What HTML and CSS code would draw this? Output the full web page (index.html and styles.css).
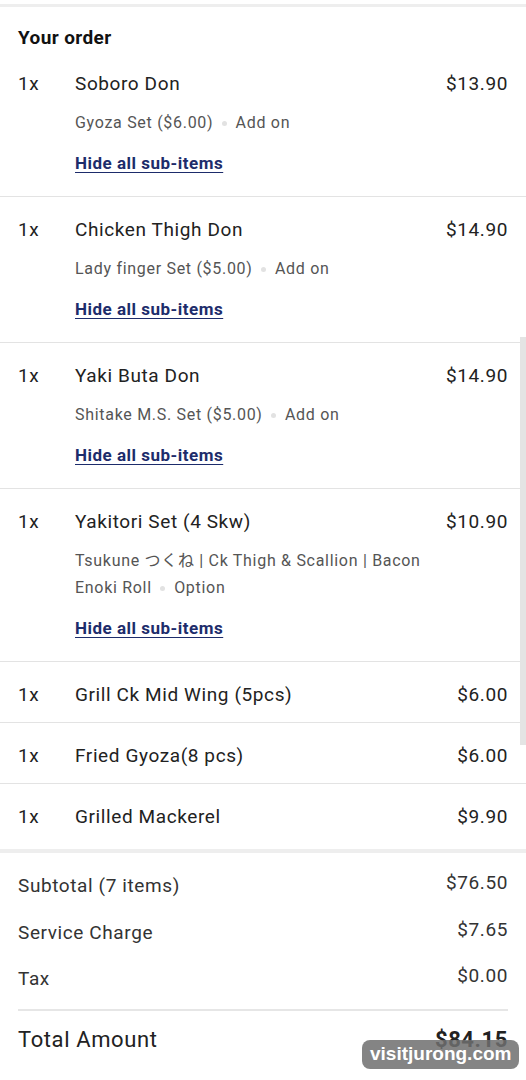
FILE: index.html
```html
<!DOCTYPE html>
<html lang="en">
<head>
    <meta charset="UTF-8">
    <meta name="viewport" content="width=device-width, initial-scale=1.0">
    <title>Your order</title>
    <link rel="stylesheet" href="styles.css">
</head>
<body>

<div class="order">
    <h2 class="order-title">Your order</h2>

    <div class="item">
        <div class="item-row">
            <span class="qty">1x</span>
            <span class="name">Soboro Don</span>
            <span class="price">$13.90</span>
        </div>
        <p class="sub">Gyoza Set ($6.00) <span class="dot"></span> Add on</p>
        <a class="hide-link" href="#">Hide all sub-items</a>
    </div>

    <div class="item">
        <div class="item-row">
            <span class="qty">1x</span>
            <span class="name">Chicken Thigh Don</span>
            <span class="price">$14.90</span>
        </div>
        <p class="sub">Lady finger Set ($5.00) <span class="dot"></span> Add on</p>
        <a class="hide-link" href="#">Hide all sub-items</a>
    </div>

    <div class="item">
        <div class="item-row">
            <span class="qty">1x</span>
            <span class="name">Yaki Buta Don</span>
            <span class="price">$14.90</span>
        </div>
        <p class="sub">Shitake M.S. Set ($5.00) <span class="dot"></span> Add on</p>
        <a class="hide-link" href="#">Hide all sub-items</a>
    </div>

    <div class="item">
        <div class="item-row">
            <span class="qty">1x</span>
            <span class="name">Yakitori Set (4 Skw)</span>
            <span class="price">$10.90</span>
        </div>
        <p class="sub">Tsukune つくね | Ck Thigh &amp; Scallion | Bacon Enoki Roll <span class="dot"></span> Option</p>
        <a class="hide-link" href="#">Hide all sub-items</a>
    </div>

    <div class="item simple">
        <div class="item-row">
            <span class="qty">1x</span>
            <span class="name">Grill Ck Mid Wing (5pcs)</span>
            <span class="price">$6.00</span>
        </div>
    </div>

    <div class="item simple">
        <div class="item-row">
            <span class="qty">1x</span>
            <span class="name">Fried Gyoza(8 pcs)</span>
            <span class="price">$6.00</span>
        </div>
    </div>

    <div class="item simple last">
        <div class="item-row">
            <span class="qty">1x</span>
            <span class="name">Grilled Mackerel</span>
            <span class="price">$9.90</span>
        </div>
    </div>

    <div class="totals">
        <div class="total-line">
            <span>Subtotal (7 items)</span>
            <span>$76.50</span>
        </div>
        <div class="total-line">
            <span>Service Charge</span>
            <span>$7.65</span>
        </div>
        <div class="total-line">
            <span>Tax</span>
            <span>$0.00</span>
        </div>
        <div class="grand-total">
            <span>Total Amount</span>
            <span class="grand-price">$84.15</span>
        </div>
    </div>
</div>

<div class="scrollbar"></div>
<div class="watermark">visitjurong.com</div>

</body>
</html>
```

FILE: styles.css
```css
    body {
        font-family: Roboto, 'Noto Sans CJK JP', sans-serif;
        margin: 0;
        padding-top: 4px;
        background: white;
        color: #222;
        height: 1076px;
        overflow: hidden;
        position: relative;
    }
    .order {
        border-top: 3px solid #eeeeee;
    }
    .order-title {
        margin: 0;
        padding: 19px 18px 0;
        font-size: 19px;
        font-weight: 700;
        line-height: 24px;
        letter-spacing: 0.4px;
        color: #111;
    }
    .item {
        padding: 19px 18px 21px;
        border-bottom: 1px solid #e3e3e3;
    }
    .order-title + .item {
        padding-top: 20px;
    }
    .item.simple {
        padding-top: 19px;
        padding-bottom: 13px;
    }
    .item.last {
        padding-bottom: 18px;
        border-bottom: 4px solid #eeeeee;
    }
    .item-row {
        display: flex;
        font-size: 19px;
        line-height: 28px;
        letter-spacing: 0.6px;
        color: #222;
    }
    .qty {
        width: 57px;
        flex-shrink: 0;
    }
    .name {
        flex: 1;
    }
    .price {
        text-align: right;
    }
    .sub {
        margin: 11px 60px 0 57px;
        font-size: 16px;
        line-height: 27px;
        letter-spacing: 0.7px;
        color: #555;
    }
    .dot {
        display: inline-block;
        width: 5px;
        height: 5px;
        border-radius: 50%;
        background: #e2e2e2;
        vertical-align: middle;
        margin: 0 4px;
    }
    .hide-link {
        display: block;
        width: max-content;
        margin: 15px 0 0 57px;
        font-size: 17px;
        font-weight: 700;
        line-height: 24px;
        letter-spacing: 0.5px;
        color: #1d2c6b;
        text-decoration: underline;
        text-underline-offset: 3px;
    }
    .totals {
        padding: 19px 18px 0;
    }
    .total-line {
        display: flex;
        justify-content: space-between;
        font-size: 19px;
        line-height: 28px;
        letter-spacing: 0.6px;
        color: #333;
        margin-bottom: 18.5px;
    }
    .total-line span:last-child {
        margin-top: -3px;
    }
    .grand-total {
        display: flex;
        justify-content: space-between;
        border-top: 2px solid #e6e6e6;
        padding-top: 14px;
        margin-top: -3px;
        font-size: 22px;
        line-height: 30px;
        letter-spacing: 0.6px;
        color: #222;
    }
    .grand-price {
        font-weight: 700;
    }
    .scrollbar {
        position: absolute;
        right: 0;
        top: 337px;
        width: 6px;
        height: 408px;
        background: #e4e4e4;
    }
    .watermark {
        position: absolute;
        left: 362px;
        top: 1040px;
        padding: 0 8px;
        height: 29px;
        line-height: 28px;
        border-radius: 8px;
        background: rgba(110, 110, 110, 0.85);
        color: white;
        font-family: 'Liberation Sans', Arial, sans-serif;
        font-weight: 700;
        font-size: 19px;
    }
```
